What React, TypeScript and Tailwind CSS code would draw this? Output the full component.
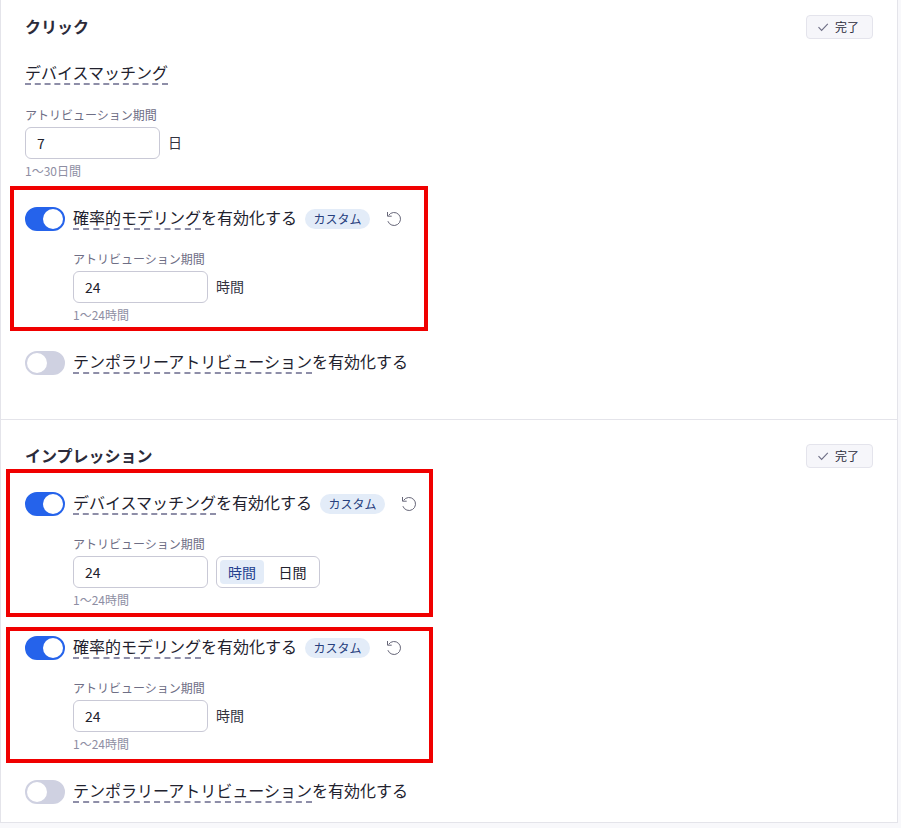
import type { ReactNode } from 'react'

const font = 'font-["Noto_Sans_CJK_JP","Noto_Sans",sans-serif]'

function Toggle({ on }: { on: boolean }) {
  return (
    <span
      className={`flex h-6 w-10 shrink-0 items-center rounded-full border-2 ${
        on ? 'justify-end border-[#2563eb] bg-[#2563eb]' : 'justify-start border-[#cfd1e1] bg-[#cfd1e1]'
      }`}
    >
      <span className="h-5 w-5 rounded-full bg-white" />
    </span>
  )
}

function Dashed({ children }: { children: string }) {
  return (
    <span className="underline decoration-[#8e8ea8] decoration-dashed decoration-[1.5px] underline-offset-4 [text-decoration-skip-ink:none]">
      {children}
    </span>
  )
}

function CheckMark() {
  return (
    <svg width="12" height="12" viewBox="0 0 12 12" fill="none" stroke="#6e6e85" strokeWidth="1.1">
      <path d="M1.5 6.2 4.6 9.4 10.8 2.8" />
    </svg>
  )
}

function ResetIcon() {
  return (
    <svg width="16" height="16" viewBox="0 0 16 16" fill="none" stroke="#666678" strokeWidth="1" className="ml-4">
      <path d="M1.5 1v4.2h4.2" />
      <path d="M2.6 4.4A6.5 6.5 0 1 1 1.9 10.2" />
    </svg>
  )
}

function DoneButton() {
  return (
    <button
      type="button"
      className="flex h-6 w-[67px] items-center justify-center gap-[6px] rounded border border-[#e4e4ec] bg-[#f6f6fa] pr-[3px] text-xs text-[#2b2b3a]"
    >
      <CheckMark />
      完了
    </button>
  )
}

function CustomRow({ label, rest }: { label: string; rest: string }) {
  return (
    <div className="flex h-6 items-center">
      <Toggle on />
      <span className="mb-1 ml-2 text-base leading-6 text-[#22222e]">
        <Dashed>{label}</Dashed>
        {rest}
      </span>
      <span className="ml-2 flex h-5 w-[65px] items-center justify-center rounded-full bg-[#e3ecf8] text-xs text-[#27407e]">
        カスタム
      </span>
      <ResetIcon />
    </div>
  )
}

function TemporalRow() {
  return (
    <div className="flex h-6 items-center">
      <Toggle on={false} />
      <span className="mb-1 ml-2 text-base leading-6 text-[#22222e]">
        <Dashed>テンポラリーアトリビューション</Dashed>を有効化する
      </span>
    </div>
  )
}

function WindowField({ value, hint, unit }: { value: string; hint: string; unit: ReactNode }) {
  return (
    <div>
      <div className="mb-0.5 text-xs leading-5 text-[#6e6e85]">アトリビューション期間</div>
      <div className="flex h-8 items-center gap-2">
        <div className="flex h-8 w-[135px] items-center rounded-md border border-[#c9c9d6] bg-white px-[11px] text-sm text-[#22222e]">
          {value}
        </div>
        {unit}
      </div>
      <div className="mt-0.5 text-xs leading-5 text-[#8e8ea3]">{hint}</div>
    </div>
  )
}

function Unit({ children }: { children: string }) {
  return <span className="mb-0.5 text-sm text-[#33333f]">{children}</span>
}

function UnitSwitch() {
  return (
    <div className="flex h-8 w-[104px] items-center rounded-md border border-[#c9c9d6] bg-white pl-[3px] text-sm">
      <span className="flex h-6 w-[44px] shrink-0 items-center justify-center rounded-sm bg-[#e3ecf8] text-[#23408f]">
        時間
      </span>
      <span className="ml-0.5 flex h-6 w-[53px] shrink-0 items-center justify-center text-[#22222e]">日間</span>
    </div>
  )
}

function SectionHeader({ title }: { title: string }) {
  return (
    <div className="flex h-6 items-center justify-between pr-6">
      <h3 className="mb-[3px] text-base font-bold leading-6 text-[#2b2b3a]">{title}</h3>
      <DoneButton />
    </div>
  )
}

export default function App() {
  return (
    <div className={`relative h-[828px] w-[901px] overflow-hidden bg-[#f8f8fb] ${font}`}>
      <div className="h-[823px] w-[898px] border-r border-b border-l border-[#e4e4ea] bg-white">
        <section className="h-[420px] border-b border-[#e4e4ea] pt-[15px] pl-6">
          <SectionHeader title="クリック" />
          <div className="mt-[21px] text-base leading-6 text-[#22222e]">
            <Dashed>デバイスマッチング</Dashed>
          </div>
          <div className="mt-[21px]">
            <WindowField value="7" hint="1〜30日間" unit={<Unit>日</Unit>} />
          </div>
          <div className="mt-[26px]">
            <CustomRow label="確率的モデリング" rest="を有効化する" />
          </div>
          <div className="mt-[18px] ml-12">
            <WindowField value="24" hint="1〜24時間" unit={<Unit>時間</Unit>} />
          </div>
          <div className="mt-[26px]">
            <TemporalRow />
          </div>
        </section>
        <section className="pt-6 pl-6">
          <SectionHeader title="インプレッション" />
          <div className="mt-6">
            <CustomRow label="デバイスマッチング" rest="を有効化する" />
          </div>
          <div className="mt-[18px] ml-12">
            <WindowField value="24" hint="1〜24時間" unit={<UnitSwitch />} />
          </div>
          <div className="mt-[26px]">
            <CustomRow label="確率的モデリング" rest="を有効化する" />
          </div>
          <div className="mt-[18px] ml-12">
            <WindowField value="24" hint="1〜24時間" unit={<Unit>時間</Unit>} />
          </div>
          <div className="mt-[26px]">
            <TemporalRow />
          </div>
        </section>
      </div>
      {/* annotation boxes drawn on top of the screenshot */}
      <div className="absolute top-[186px] left-[10px] h-[145px] w-[418px] border-4 border-[#f00000]" />
      <div className="absolute top-[469px] left-[6px] h-[148px] w-[427px] border-4 border-[#f00000]" />
      <div className="absolute top-[627px] left-[6px] h-[136px] w-[427px] border-4 border-[#f00000]" />
    </div>
  )
}
